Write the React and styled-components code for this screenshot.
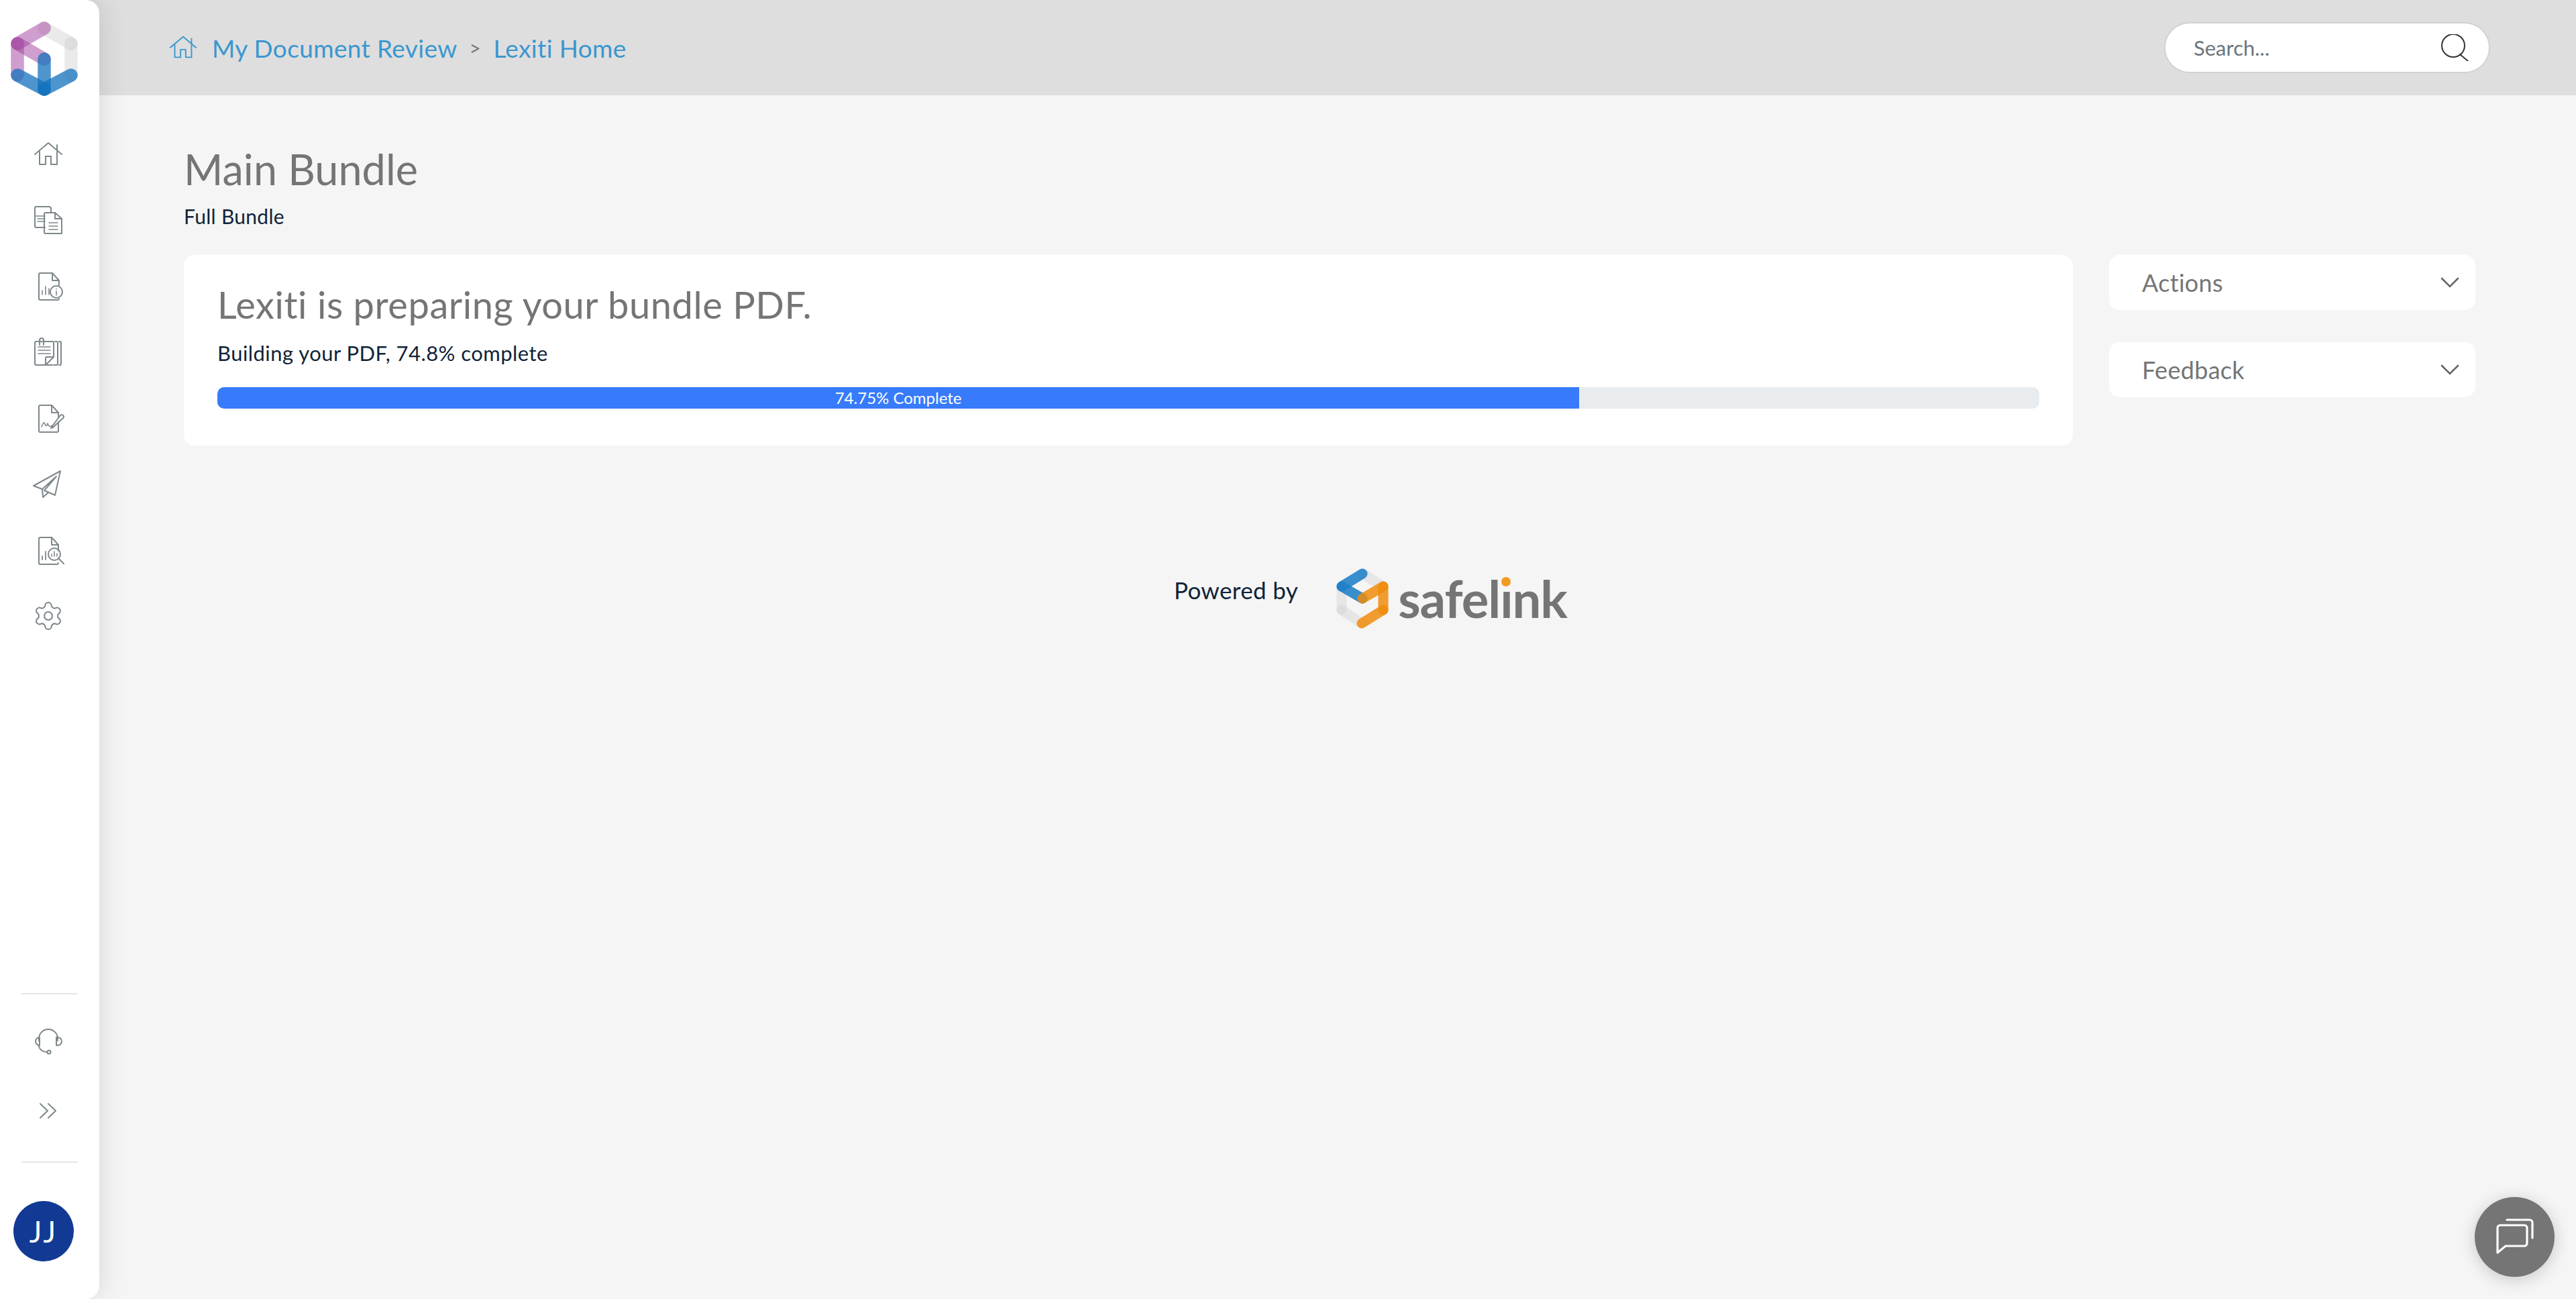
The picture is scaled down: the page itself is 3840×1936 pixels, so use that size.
import React from 'react';
import styled, { createGlobalStyle } from 'styled-components';
import { Settings } from 'lucide-react';

const GlobalStyle = createGlobalStyle`
  html, body {
    margin: 0;
    padding: 0;
    height: 100%;
    background: #f5f5f5;
    font-family: Lato, "Open Sans", sans-serif;
  }
  * {
    box-sizing: border-box;
  }
`;

const Page = styled.div`
  display: flex;
  height: 100vh;
  overflow: hidden;
  background: #f5f5f5;
`;

const Sidebar = styled.aside`
  position: relative;
  z-index: 2;
  flex: 0 0 148px;
  display: flex;
  flex-direction: column;
  background: #fff;
  border-radius: 0 20px 20px 0;
  box-shadow: 0 0 44px rgba(0, 0, 0, 0.13);
`;

const LogoBox = styled.div`
  height: 181px;
  padding-top: 30px;
`;

const Nav = styled.nav`
  display: flex;
  flex-direction: column;
`;

const NavItem = styled.a`
  height: ${(p) => p.$h || 98.3}px;
  display: flex;
  align-items: center;
  padding-left: 48px;
  color: #7d888b;
`;

const SideBottom = styled.div`
  margin-top: auto;
  padding-bottom: 56px;
  display: flex;
  flex-direction: column;
`;

const Divider = styled.div`
  width: 84px;
  height: 2px;
  margin-left: 32px;
  background: #e6e6e6;
`;

const BottomNav = styled.div`
  display: flex;
  flex-direction: column;
  gap: 2px;
  margin: 21px 0 26px;
`;

const Avatar = styled.div`
  width: 90px;
  height: 90px;
  margin: 57px 0 0 20px;
  border-radius: 50%;
  background: #123a94;
  color: #fff;
  display: flex;
  align-items: center;
  justify-content: center;
  font-size: 44px;
  letter-spacing: 3px;
`;

const Main = styled.main`
  flex: 1;
  min-width: 0;
  margin-left: -20px;
`;

const Header = styled.header`
  height: 142px;
  padding: 0 128px 0 122px;
  background: #dedede;
  display: flex;
  align-items: center;
  justify-content: space-between;
`;

const Crumbs = styled.div`
  display: flex;
  align-items: center;
  color: #3a97cf;
  font-size: 37px;
  letter-spacing: 0.35px;
`;

const CrumbHome = styled.span`
  display: flex;
  margin-right: 20px;
`;

const CrumbSep = styled.span`
  margin: 0 18px;
  color: #777;
  font-size: 30px;
`;

const SearchBox = styled.div`
  width: 486px;
  height: 76px;
  padding: 0 30px 0 40px;
  display: flex;
  align-items: center;
  justify-content: space-between;
  background: #fff;
  border: 2px solid #d2d2d2;
  border-radius: 38px;
`;

const SearchInput = styled.input`
  flex: 1;
  min-width: 0;
  border: 0;
  background: transparent;
  font: inherit;
  font-size: 31px;
  color: #6c757d;
  &::placeholder {
    color: #6c757d;
    opacity: 1;
  }
  &:focus {
    outline: none;
  }
`;

const Content = styled.div`
  padding: 72px 150px 0 146px;
`;

const Title = styled.h1`
  margin: 0;
  font-size: 63px;
  line-height: 76px;
  font-weight: 400;
  color: #757575;
`;

const SubTitle = styled.div`
  margin-top: 14px;
  font-size: 30px;
  line-height: 36px;
  color: #0f2438;
  letter-spacing: 0.3px;
`;

const Columns = styled.div`
  margin-top: 40px;
  display: grid;
  grid-template-columns: 1fr 546px;
  gap: 54px;
  align-items: start;
`;

const Card = styled.section`
  height: 284px;
  padding: 40px 50px 0;
  background: #fff;
  border-radius: 16px;
`;

const CardTitle = styled.h2`
  margin: 0;
  font-size: 56px;
  line-height: 68px;
  font-weight: 400;
  color: #757575;
  letter-spacing: 0.55px;
`;

const Status = styled.div`
  margin-top: 20px;
  font-size: 31px;
  line-height: 36px;
  color: #0f2438;
  letter-spacing: 0.45px;
`;

const Track = styled.div`
  margin-top: 33px;
  height: 32px;
  border-radius: 10px;
  background: #e9ecef;
  overflow: hidden;
`;

const Fill = styled.div`
  height: 100%;
  background: #377bfb;
  color: #fff;
  font-size: 24px;
  line-height: 32px;
  text-align: center;
`;

const Side = styled.div`
  display: flex;
  flex-direction: column;
  gap: 48px;
`;

const SideCard = styled.div`
  height: 82px;
  padding: 0 24px 0 49px;
  display: flex;
  align-items: center;
  justify-content: space-between;
  background: #fff;
  border-radius: 16px;
  color: #757575;
  font-size: 36px;
  letter-spacing: 0.3px;
`;

const PoweredRow = styled.div`
  margin: 183px 0 0 1476px;
  display: flex;
  align-items: flex-start;
`;

const PoweredText = styled.div`
  margin: 12px 55px 0 0;
  font-size: 35px;
  line-height: 40px;
  color: #0f2438;
  letter-spacing: 0.35px;
`;

const Wordmark = styled.div`
  margin: 0 0 0 12px;
  font-size: 76px;
  line-height: 89px;
  font-weight: 700;
  color: #757575;
  letter-spacing: -1px;
`;

const WordI = styled.span`
  position: relative;
  &::after {
    content: '';
    position: absolute;
    left: 50%;
    top: 14px;
    width: 14px;
    height: 14px;
    margin-left: -7px;
    border-radius: 50%;
    background: #f29a21;
    box-shadow: 0 0 0 3px #f5f5f5;
  }
`;

const ChatButton = styled.button`
  position: fixed;
  right: 32px;
  bottom: 33px;
  width: 119px;
  height: 119px;
  padding: 0;
  border: 0;
  border-radius: 50%;
  background: #757575;
  box-shadow: 0 4px 24px rgba(0, 0, 0, 0.18);
  display: flex;
`;

const LexitiLogo = () => {
  const purple = { stroke: '#a03d9e', opacity: 0.5 };
  const grey = { stroke: '#c8c8c8', opacity: 0.38 };
  const blue = { stroke: '#1371bd', opacity: 0.75 };
  const lines = [
    ['M106 35L106 82', grey],
    ['M66 12L106 35', grey],
    ['M66 12L26 35', purple],
    ['M26 35L26 82', purple],
    ['M26 35L66 58', purple],
    ['M66 58L66 103', blue],
    ['M26 82L66 103', blue],
    ['M106 82L66 103', blue],
  ];
  return (
    <svg width="148" height="115" viewBox="0 0 148 115" fill="none" strokeWidth="19.5" strokeLinecap="round">
      {lines.map(([d, s]) => <path key={d} d={d} {...s} />)}
    </svg>
  );
};

const SafelinkLogo = () => {
  const grey = { stroke: '#cfcfcf', opacity: 0.4 };
  const blue = { stroke: '#1f7fc8', opacity: 0.88 };
  const orange = { stroke: '#f08c0a', opacity: 0.85 };
  const lines = [
    ['M41 8L72 27', grey],
    ['M10 27L10 62', grey],
    ['M10 62L40 82', grey],
    ['M41 8L10 27', blue],
    ['M10 27L41 45', blue],
    ['M41 45L72 27', orange],
    ['M72 27L72 62', orange],
    ['M72 62L40 82', orange],
  ];
  return (
    <svg width="82" height="90" viewBox="0 0 82 90" fill="none" strokeWidth="15" strokeLinecap="round">
      {lines.map(([d, s]) => <path key={d} d={d} {...s} />)}
    </svg>
  );
};

const Glyph = ({ children, w = 48, h = 48 }) => (
  <svg width={w} height={h} viewBox="0 0 48 48" fill="none" stroke="currentColor" strokeWidth="2" strokeLinecap="round" strokeLinejoin="round">
    {children}
  </svg>
);

const HomeGlyph = (props) => (
  <Glyph {...props}>
    <path d="M4 24L24 7L44 24" />
    <path d="M37 18V10" />
    <path d="M11 20V39H20V27H28V39H37V20" />
  </Glyph>
);

const DocsGlyph = () => (
  <Glyph>
    <path d="M19 35H6a2 2 0 0 1-2-2V6a2 2 0 0 1 2-2h20l2 2v7" />
    <path d="M4 18H19M8 22H19M8 26H19" strokeWidth="1.6" />
    <path d="M20 13H34L44 22V44H20a2 2 0 0 1-2-2V15a2 2 0 0 1 2-2z" />
    <path d="M34 13V22H44" />
    <path d="M25 28H38M25 33H38M25 38H38" strokeWidth="1.6" />
  </Glyph>
);

const InfoDocGlyph = () => (
  <Glyph>
    <path d="M40 22V15L30 4H12a2 2 0 0 0-2 2V42a2 2 0 0 0 2 2H38a2 2 0 0 0 2-2" />
    <path d="M30 4V15H40" />
    <path d="M15 36V30M20 36V24M25 36V27" strokeWidth="1.6" />
    <circle cx="36" cy="32" r="9" />
    <path d="M36 31V37M36 27.5V28" strokeWidth="1.6" />
  </Glyph>
);

const NotesGlyph = () => (
  <Glyph>
    <path d="M30 43H6a2 2 0 0 1-2-2V10a2 2 0 0 1 2-2H30a2 2 0 0 1 2 2V31L20 43" />
    <path d="M20 43V33a2 2 0 0 1 2-2H32" />
    <path d="M11 13V6a3 3 0 0 1 6 0V13" />
    <path d="M9 16H27M9 21H27M9 26H27" strokeWidth="1.6" />
    <path d="M32 43H36a2 2 0 0 0 2-2V10a2 2 0 0 0-2-2H34" />
    <path d="M40 8a2 2 0 0 1 3 2V41a2 2 0 0 1-3 2" />
  </Glyph>
);

const SignGlyph = () => (
  <Glyph>
    <path d="M39 22V16L29 5H12a2 2 0 0 0-2 2V43a2 2 0 0 0 1 2H37a2 2 0 0 0 2-2V30" />
    <path d="M29 5V16H39" />
    <path d="M14 37C16 31 18 29 19 33C20 37 22 36 23 32C24 36 26 38 30 35" strokeWidth="1.6" />
    <path d="M30 36L28 39L31 38L46 24a2.8 2.8 0 0 0-4-4z" />
  </Glyph>
);

const PlaneGlyph = () => (
  <Glyph>
    <path d="M42 4L2 26L15 31L36 12L18 33L34 40z" />
    <path d="M15 31L16 43L24 36" />
  </Glyph>
);

const SearchDocGlyph = () => (
  <Glyph>
    <path d="M39 25V16L29 5H12a2 2 0 0 0-2 2V43a2 2 0 0 0 2 2H37a2 2 0 0 0 2-2" />
    <path d="M29 5V16H39" />
    <path d="M15 38V33M20 38V26" strokeWidth="1.8" />
    <circle cx="33" cy="30" r="9" />
    <path d="M29 33V30M33 33V26M37 33V29" strokeWidth="1.6" />
    <path d="M39 36L47 44" />
  </Glyph>
);

const HeadsetGlyph = () => (
  <Glyph>
    <path d="M10 22V19a14 14 0 0 1 28 0V22" />
    <path d="M11 17a6 6 0 0 0 0 12z" />
    <path d="M36 17h2a6 6 0 0 1 0 12h-2z" />
    <path d="M10 29c0 6 6 10 12 10" />
    <circle cx="25" cy="39" r="2.6" />
  </Glyph>
);

const ChevronsGlyph = () => (
  <Glyph>
    <path d="M12 14L23 24.5L12 35" />
    <path d="M24 14L35 24.5L24 35" />
  </Glyph>
);

const SearchGlyph = () => (
  <svg width="42" height="40" viewBox="0 0 42 40" fill="none" stroke="#333" strokeWidth="2">
    <circle cx="19" cy="17" r="17" />
    <path d="M29 30L41 40" strokeLinecap="round" />
  </svg>
);

const ChevronGlyph = () => (
  <svg width="28" height="17" viewBox="0 0 28 17" fill="none" stroke="#666" strokeWidth="2.6" strokeLinecap="round">
    <path d="M2 2L14 14L26 2" />
  </svg>
);

const ChatGlyph = () => (
  <svg width="119" height="119" viewBox="0 0 119 119" fill="none" stroke="#fff" strokeWidth="3.2" strokeLinecap="round" strokeLinejoin="round">
    <path d="M34 83V46a4 4 0 0 1 4-4H74a4 4 0 0 1 4 4V69a4 4 0 0 1-4 4H46z" />
    <path d="M48 34H82a4 4 0 0 1 4 4V61" />
  </svg>
);

const navIcons = [HomeGlyph, DocsGlyph, InfoDocGlyph, NotesGlyph, SignGlyph, PlaneGlyph, SearchDocGlyph];

export default function App() {
  const progress = 74.75;
  return (
    <Page>
      <GlobalStyle />
      <Sidebar>
        <LogoBox><LexitiLogo /></LogoBox>
        <Nav>
          {navIcons.map((NavIcon, i) => (
            <NavItem key={i}><NavIcon /></NavItem>
          ))}
          <NavItem><Settings size={48} strokeWidth={1.05} /></NavItem>
        </Nav>
        <SideBottom>
          <Divider />
          <BottomNav>
            <NavItem $h={100}><HeadsetGlyph /></NavItem>
            <NavItem $h={100}><ChevronsGlyph /></NavItem>
          </BottomNav>
          <Divider />
          <Avatar>JJ</Avatar>
        </SideBottom>
      </Sidebar>
      <Main>
        <Header>
          <Crumbs>
            <CrumbHome><HomeGlyph w={46} h={46} /></CrumbHome>
            My Document Review
            <CrumbSep>&gt;</CrumbSep>
            Lexiti Home
          </Crumbs>
          <SearchBox>
            <SearchInput placeholder="Search..." />
            <SearchGlyph />
          </SearchBox>
        </Header>
        <Content>
          <Title>Main Bundle</Title>
          <SubTitle>Full Bundle</SubTitle>
          <Columns>
            <Card>
              <CardTitle>Lexiti is preparing your bundle PDF.</CardTitle>
              <Status>Building your PDF, 74.8% complete</Status>
              <Track>
                <Fill style={{ width: `${progress}%` }}>74.75% Complete</Fill>
              </Track>
            </Card>
            <Side>
              <SideCard>Actions<ChevronGlyph /></SideCard>
              <SideCard>Feedback<ChevronGlyph /></SideCard>
            </Side>
          </Columns>
          <PoweredRow>
            <PoweredText>Powered by</PoweredText>
            <SafelinkLogo />
            <Wordmark>safel<WordI>i</WordI>nk</Wordmark>
          </PoweredRow>
        </Content>
      </Main>
      <ChatButton aria-label="Chat"><ChatGlyph /></ChatButton>
    </Page>
  );
}
